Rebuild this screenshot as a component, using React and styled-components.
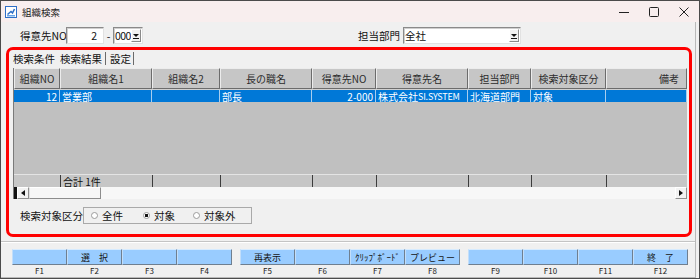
import React from "react";
import styled, { createGlobalStyle, css } from "styled-components";

const GlobalStyle = createGlobalStyle`
  html, body {
    margin: 0;
    padding: 0;
    background: #ffffff;
  }
  body {
    font-family: "Noto Sans CJK JP", "Noto Sans", sans-serif;
    font-size: 10.5px;
    color: #111;
  }
  * {
    box-sizing: border-box;
  }
`;

const sunken = css`
  background: #ffffff;
  border: 1px solid;
  border-color: #8a8a8a #e2e2e2 #e2e2e2 #8a8a8a;
  box-shadow: inset 1px 1px 0 #cfcfcf;
`;

const raised = css`
  border: 1px solid;
  border-color: #ffffff #8a8a8a #8a8a8a #ffffff;
`;

const Window = styled.div`
  width: 700px;
  height: 279px;
  border: 1px solid #4b4b4b;
  background: #f0f0f0;
  display: flex;
  flex-direction: column;
  overflow: hidden;
`;

const TitleBar = styled.div`
  height: 21px;
  flex: none;
  display: flex;
  align-items: center;
  padding-left: 4px;
  background: #f8eeee;
`;

const TitleText = styled.span`
  margin-left: 5px;
  font-size: 9.5px;
  color: #222;
`;

const Controls = styled.div`
  margin-left: auto;
  display: flex;
  height: 100%;
`;

const ControlBtn = styled.div`
  width: 30px;
  height: 100%;
  display: flex;
  align-items: center;
  justify-content: center;
`;

const Client = styled.div`
  flex: 1;
  display: flex;
  flex-direction: column;
  padding-left: 5px;
  margin-right: 3px;
  border-right: 1px solid #b9b9b9;
  border-bottom: 1px solid #b9b9b9;
`;

const TopRow = styled.div`
  height: 17px;
  margin-top: 5px;
  padding-left: 14px;
  display: flex;
  align-items: center;
`;

const FieldLabel = styled.span`
  width: ${(p) => p.$w}px;
  margin-left: ${(p) => p.$offset || 0}px;
  flex: none;
  white-space: nowrap;
`;

const TextBox = styled.div`
  ${sunken};
  width: ${(p) => p.$w}px;
  height: 17px;
  padding-right: 6px;
  display: flex;
  align-items: center;
  justify-content: flex-end;
`;

const Dash = styled.span`
  width: 9px;
  text-align: center;
`;

const Combo = styled.div`
  ${sunken};
  width: ${(p) => p.$w}px;
  height: 17px;
  display: flex;
  align-items: center;
  padding-left: 1px;
`;

const ComboText = styled.span`
  flex: 1;
  white-space: nowrap;
  letter-spacing: ${(p) => (p.$tight ? "-0.6px" : "0")};
`;

const ComboArrow = styled.div`
  ${raised};
  width: 10px;
  height: 13px;
  margin-right: 1px;
  background: #f0f0f0;
  display: flex;
  align-items: center;
  justify-content: center;
`;

const Frame = styled.div`
  width: 686px;
  height: 190px;
  margin-top: 3px;
  border: 3px solid #ff0000;
  border-radius: 7px;
  display: flex;
  flex-direction: column;
  padding-left: 4px;
`;

const Tabs = styled.div`
  height: 16px;
  display: flex;
  align-items: center;
`;

const Tab = styled.div`
  width: ${(p) => p.$w}px;
  padding-left: ${(p) => p.$pl || 0}px;
  height: 13px;
  line-height: 13px;
  white-space: nowrap;
  border-right: ${(p) => (p.$sep ? "1px solid #6a6a6a" : "none")};
`;

const Grid = styled.div`
  width: 674px;
  height: 131px;
  margin-top: 2px;
  background: #c0c0c0;
  border-left: 1px solid #7a7a7a;
  display: flex;
  flex-direction: column;
  font-size: 10px;
`;

const HeadRow = styled.div`
  height: 21px;
  display: flex;
`;

const HeadCell = styled.div`
  width: ${(p) => p.$w}px;
  flex: none;
  display: flex;
  align-items: center;
  justify-content: ${(p) => (p.$align === "right" ? "flex-end" : "center")};
  padding: 0 ${(p) => (p.$align === "right" ? 7 : 1)}px;
  background: #c6c6c6;
  border: 1px solid;
  border-color: #ececec #6c6c6c #6c6c6c #ececec;
  color: #2c2c2c;
  white-space: nowrap;
`;

const DataRow = styled.div`
  height: 13px;
  display: flex;
  border-top: 1px solid #d0d0d0;
  background: #0078d7;
`;

const DataCell = styled.div`
  width: ${(p) => p.$w}px;
  flex: none;
  padding: 0 2px;
  display: flex;
  align-items: center;
  justify-content: ${(p) => (p.$align === "right" ? "flex-end" : "flex-start")};
  color: #ffffff;
  border-right: 1px solid #a8cdee;
  white-space: nowrap;
  overflow-x: clip;
  overflow-y: visible;
`;

const Latin = styled.span`
  font-size: 9px;
  letter-spacing: -0.2px;
`;

const EmptyArea = styled.div`
  flex: 1;
`;

const FootRow = styled.div`
  height: 13px;
  display: flex;
  border-top: 1px solid #e4e4e4;
  background: #c6c6c6;
`;

const FootCell = styled.div`
  width: ${(p) => p.$w}px;
  flex: none;
  padding-left: 2px;
  display: flex;
  align-items: center;
  border-left: ${(p) => (p.$first ? "none" : "1px solid #3c3c3c")};
  white-space: nowrap;
`;

const HScroll = styled.div`
  height: 12px;
  display: flex;
  background: #f7f7f7;
`;

const ScrollStop = styled.div`
  width: 3px;
  background: #111;
`;

const ScrollBtn = styled.div`
  ${raised};
  width: 12px;
  height: 12px;
  background: #f2f2f2;
  display: flex;
  align-items: center;
  justify-content: center;
  border-color: #ffffff #909090 #909090 #ffffff;
`;

const ScrollThumb = styled.div`
  width: 72px;
  height: 12px;
  background: #f6f6f6;
  border: 1px solid;
  border-color: #ffffff #8c8c8c #8c8c8c #e0e0e0;
`;

const ScrollTrack = styled.div`
  flex: 1;
`;

const RadioRow = styled.div`
  height: 17px;
  margin-top: 8px;
  padding-left: 7px;
  display: flex;
  align-items: center;
`;

const RadioCaption = styled.span`
  width: 63px;
  white-space: nowrap;
`;

const RadioBox = styled.div`
  width: 169px;
  height: 17px;
  border: 1px solid #a9a9a9;
  display: flex;
  align-items: center;
  padding-left: 7px;
`;

const RadioItem = styled.div`
  width: ${(p) => p.$w}px;
  display: flex;
  align-items: center;
  gap: 4px;
  white-space: nowrap;
`;

const RadioDot = styled.span`
  width: 7px;
  height: 7px;
  border-radius: 50%;
  border: 1px solid #9c9c9c;
  background: ${(p) =>
    p.$on ? "radial-gradient(circle, #111 0 1.4px, #ffffff 1.9px)" : "#ffffff"};
`;

const Etched = styled.div`
  height: 2px;
  margin-top: 4px;
  margin-left: -5px;
  border-top: 1px solid #c4c4c4;
  border-bottom: 1px solid #ffffff;
`;

const FnBar = styled.div`
  margin-top: 6px;
  padding-left: 6px;
  display: flex;
  gap: 8px;
`;

const FnGroup = styled.div`
  display: flex;
`;

const FnKey = styled.div`
  width: 55px;
  display: flex;
  flex-direction: column;
  align-items: center;
`;

const FnButton = styled.div`
  width: 100%;
  height: 16px;
  background: #99ccff;
  border: 1px solid;
  border-color: #d6ebff #6f7f90 #6f7f90 #c2defa;
  display: flex;
  align-items: center;
  justify-content: center;
  font-size: 9px;
  color: #141414;
  white-space: nowrap;
`;

const FnLabel = styled.span`
  height: 11px;
  line-height: 11px;
  font-size: 8px;
  color: #222;
`;

const columns = [
  { title: "組織NO", w: 46 },
  { title: "組織名1", w: 92 },
  { title: "組織名2", w: 68 },
  { title: "長の職名", w: 92 },
  { title: "得意先NO", w: 64 },
  { title: "得意先名", w: 92 },
  { title: "担当部門", w: 63 },
  { title: "検索対象区分", w: 75 },
  { title: "備考", w: 81, align: "right" },
];

const record = [
  { v: "12", align: "right" },
  { v: "営業部" },
  { v: "" },
  { v: "部長" },
  { v: "2-000", align: "right" },
  {
    v: (
      <>
        株式会社<Latin>SI.SYSTEM</Latin>
      </>
    ),
  },
  { v: "北海道部門" },
  { v: "対象" },
  { v: "" },
];

const fnGroups = [
  ["", "選　択", "", ""],
  ["再表示", "", "ｸﾘｯﾌﾟﾎﾞｰﾄﾞ", "プレビュー"],
  ["", "", "", "終　了"],
];

function AppIcon() {
  return (
    <svg width="12" height="12" viewBox="0 0 12 12">
      <rect x="0.5" y="0.5" width="11" height="11" fill="#ffffff" stroke="#2f6fc7" />
      <path d="M2.5 8.5 L6 5.5 L7.5 7 L9.5 3" fill="none" stroke="#2f6fc7" strokeWidth="1.6" />
      <rect x="2" y="9" width="8" height="1.5" fill="#6aa5e8" />
    </svg>
  );
}

function DownTri() {
  return (
    <svg width="6" height="6" viewBox="0 0 6 6">
      <path d="M0 1 H6 L3 4 Z" fill="#111" />
      <rect x="0" y="5" width="6" height="1" fill="#111" />
    </svg>
  );
}

function SideTri({ dir }) {
  return (
    <svg width="4" height="6" viewBox="0 0 4 6">
      <path d={dir === "left" ? "M4 0 V6 L0 3 Z" : "M0 0 V6 L4 3 Z"} fill="#111" />
    </svg>
  );
}

export default function App() {
  return (
    <>
      <GlobalStyle />
      <Window>
        <TitleBar>
          <AppIcon />
          <TitleText>組織検索</TitleText>
          <Controls>
            <ControlBtn>
              <svg width="10" height="10" viewBox="0 0 10 10">
                <line x1="0" y1="5.5" x2="10" y2="5.5" stroke="#222" />
              </svg>
            </ControlBtn>
            <ControlBtn>
              <svg width="10" height="10" viewBox="0 0 10 10">
                <rect x="0.5" y="0.5" width="9" height="9" rx="1" fill="none" stroke="#222" />
              </svg>
            </ControlBtn>
            <ControlBtn>
              <svg width="10" height="10" viewBox="0 0 10 10">
                <path d="M0.5 0.5 L9.5 9.5 M9.5 0.5 L0.5 9.5" stroke="#222" />
              </svg>
            </ControlBtn>
          </Controls>
        </TitleBar>

        <Client>
          <TopRow>
            <FieldLabel $w={46}>得意先NO</FieldLabel>
            <TextBox $w={38}>2</TextBox>
            <Dash>-</Dash>
            <Combo $w={30}>
              <ComboText $tight>000</ComboText>
              <ComboArrow>
                <DownTri />
              </ComboArrow>
            </Combo>
            <FieldLabel $w={45} $offset={215}>
              担当部門
            </FieldLabel>
            <Combo $w={118}>
              <ComboText>全社</ComboText>
              <ComboArrow>
                <DownTri />
              </ComboArrow>
            </Combo>
          </TopRow>

          <Frame>
            <Tabs>
              <Tab $w={47}>検索条件</Tab>
              <Tab $w={46} $sep>
                検索結果
              </Tab>
              <Tab $w={28} $pl={4} $sep>
                設定
              </Tab>
            </Tabs>

            <Grid>
              <HeadRow>
                {columns.map((c) => (
                  <HeadCell key={c.title} $w={c.w} $align={c.align}>
                    {c.title}
                  </HeadCell>
                ))}
              </HeadRow>
              <DataRow>
                {record.map((r, i) => (
                  <DataCell key={i} $w={columns[i].w} $align={r.align}>
                    {r.v}
                  </DataCell>
                ))}
              </DataRow>
              <EmptyArea />
              <FootRow>
                {columns.map((c, i) => (
                  <FootCell key={c.title} $w={c.w} $first={i === 0}>
                    {i === 1 ? "合計 1件" : ""}
                  </FootCell>
                ))}
              </FootRow>
              <HScroll>
                <ScrollStop />
                <ScrollBtn>
                  <SideTri dir="left" />
                </ScrollBtn>
                <ScrollThumb />
                <ScrollTrack />
                <ScrollBtn>
                  <SideTri dir="right" />
                </ScrollBtn>
              </HScroll>
            </Grid>

            <RadioRow>
              <RadioCaption>検索対象区分</RadioCaption>
              <RadioBox>
                <RadioItem $w={52}>
                  <RadioDot />
                  全件
                </RadioItem>
                <RadioItem $w={50}>
                  <RadioDot $on />
                  対象
                </RadioItem>
                <RadioItem $w={50}>
                  <RadioDot />
                  対象外
                </RadioItem>
              </RadioBox>
            </RadioRow>
          </Frame>

          <Etched />

          <FnBar>
            {fnGroups.map((group, g) => (
              <FnGroup key={g}>
                {group.map((label, k) => (
                  <FnKey key={k}>
                    <FnButton>{label}</FnButton>
                    <FnLabel>F{g * 4 + k + 1}</FnLabel>
                  </FnKey>
                ))}
              </FnGroup>
            ))}
          </FnBar>
        </Client>
      </Window>
    </>
  );
}
